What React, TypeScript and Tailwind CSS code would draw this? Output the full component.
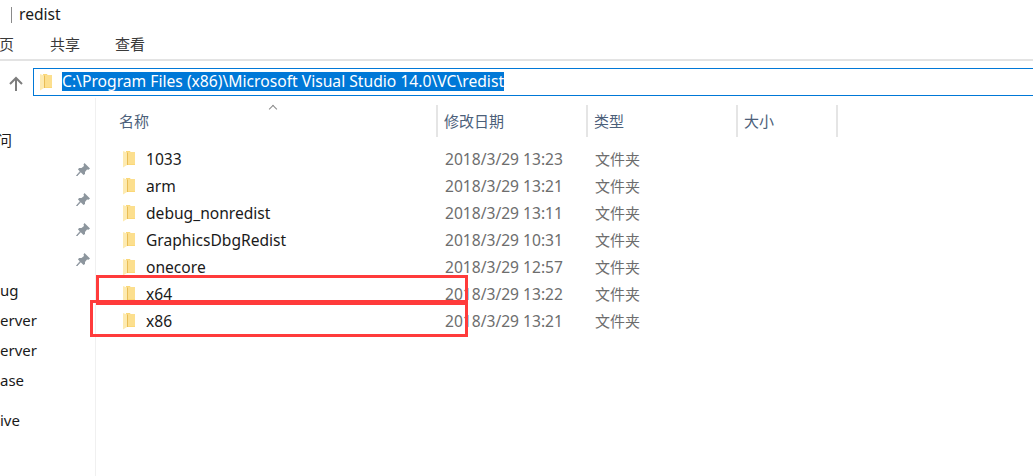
const FONT = "font-['Noto_Sans','Noto_Sans_CJK_SC',sans-serif]";

const files = [
  { name: "1033", date: "2018/3/29 13:23" },
  { name: "arm", date: "2018/3/29 13:21" },
  { name: "debug_nonredist", date: "2018/3/29 13:11" },
  { name: "GraphicsDbgRedist", date: "2018/3/29 10:31" },
  { name: "onecore", date: "2018/3/29 12:57" },
  { name: "x64", date: "2018/3/29 13:22" },
  { name: "x86", date: "2018/3/29 13:21" },
];

const Folder = () => (
  <svg width="12" height="18" viewBox="0 0 12 18" className="shrink-0">
    <path d="M3 1 H7 L8 3 H12 V15 H3 Z" fill="#fbd878" />
    <path d="M4 2 H12 V14 H4 Z" fill="#fcdf8e" />
    <path d="M0 1 L4 2.5 V15 L0 17.5 Z" fill="#fdeab0" />
    <path d="M4 2.5 H5 V15 H4 Z" fill="#e9bd55" />
  </svg>
);

const Pin = () => (
  <svg width="14" height="14" viewBox="0 0 14 14">
    <path d="M8.5 0 L14 5.5 L12.5 6.8 L11 6.4 L9 9 L9 11 L7.5 12 L2 6.5 L3 5 L5.5 5 L8 3 L7.5 1.5 Z" fill="#8d969e" />
    <path d="M5 8.5 L1 13 L0.5 12.5 L4.5 8 Z" fill="#8d969e" stroke="#8d969e" strokeWidth="0.8" />
  </svg>
);

const Column = ({ label, width, first }: { label: string; width: string; first?: boolean }) => (
  <div className={`flex h-[32px] items-center border-r-2 border-[#e5e5e5] ${width} ${first ? "pl-[23px]" : "pl-[6px]"}`}>
    <span className="text-[15px] leading-none text-[#4c607a]">{label}</span>
  </div>
);

export default function App() {
  return (
    <div className={`relative h-[476px] w-[1033px] overflow-hidden bg-white ${FONT}`}>
      <div className="flex h-[29px] items-center pl-[11px]">
        <div className="h-[16px] w-px bg-[#8a8a8a]" />
        <span className="ml-[7px] text-[15.6px] leading-none text-[#1a1a1a]">redist</span>
      </div>

      <div className="flex h-[32px] items-center border-b-2 border-[#e3e3e3] text-[15px] text-[#3a3a3a]">
        <span className="-ml-[1px] w-[51px]">页</span>
        <span className="w-[65px]">共享</span>
        <span>查看</span>
      </div>

      <div className="flex h-[37px] items-center pt-[4px]">
        <svg width="16" height="16" viewBox="0 0 16 16" className="mt-[5px] mr-[9px] ml-[8px] shrink-0">
          <path d="M8 15 V2 M2 8 L8 2 L14 8" fill="none" stroke="#7d7d7d" strokeWidth="2" />
        </svg>
        <div className="-mr-[2px] flex h-[28px] flex-1 items-center border border-[#0078d7] pl-[6px]">
          <Folder />
          <span className="ml-[10px] bg-[#0078d7] text-[15.67px] leading-[19px] whitespace-nowrap text-white">
            C:\Program Files (x86)\Microsoft Visual Studio 14.0\VC\redist
          </span>
        </div>
      </div>

      <div className="flex">
        <aside className="h-[378px] w-[96px] shrink-0 border-r border-[#f0f0f0] text-[15px] text-[#1a1a1a]">
          <p className="mt-[35px] -ml-[3px] h-[14px] text-[15px] leading-[14px]">问</p>
          <div className="mt-[16px] flex flex-col items-end gap-[16px] pr-[5px]">
            <Pin />
            <Pin />
            <Pin />
            <Pin />
          </div>
          <p className="mt-[8px] h-[30px] leading-[30px]">ug</p>
          <p className="h-[30px] leading-[30px]">erver</p>
          <p className="h-[30px] leading-[30px]">erver</p>
          <p className="h-[30px] leading-[30px]">ase</p>
          <p className="mt-[10px] h-[30px] leading-[30px]">ive</p>
        </aside>

        <main className="relative flex-1">
          <span className="absolute top-[8px] left-[174px] h-[6px] w-[6px] rotate-45 border-t border-l border-[#8a8a8a]" />
          <div className="flex pt-[7px]">
            <Column label="名称" width="w-[342px]" first />
            <Column label="修改日期" width="w-[150px]" />
            <Column label="类型" width="w-[150px]" />
            <Column label="大小" width="w-[100px]" />
          </div>
          <div className="pt-[8px]">
            {files.map((file) => (
              <div key={file.name} className="flex h-[27px] items-center">
                <div className="flex w-[343px] items-center pl-[27px] text-[15.6px] text-[#1a1a1a]">
                  <Folder />
                  <span className="ml-[11px] leading-[20px]">{file.name}</span>
                </div>
                <span className="w-[150px] pl-[6px] text-[15.6px] leading-[20px] text-[#6d6d6d]">{file.date}</span>
                <span className="pl-[6px] text-[15px] leading-[20px] text-[#6d6d6d]">文件夹</span>
              </div>
            ))}
          </div>
        </main>
      </div>

      {/* red annotation boxes drawn over the list */}
      <div className="absolute top-[275px] left-[96px] h-[30px] w-[372px] border-[3px] border-[#ff3b3b]" />
      <div className="absolute top-[300px] left-[90px] h-[37px] w-[378px] border-[3px] border-[#ff3b3b]" />
    </div>
  );
}
